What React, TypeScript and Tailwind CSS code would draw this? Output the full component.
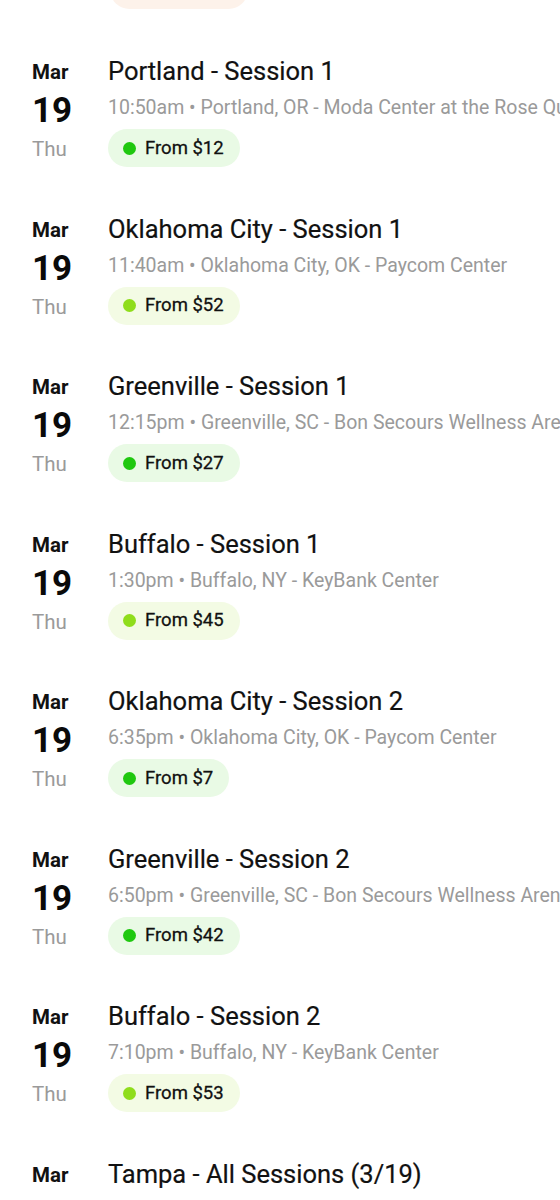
import React from 'react';

type Tone = 'green' | 'lime' | 'peach';

type Event = {
  title: string;
  time: string;
  place: string;
  price: string;
  tone: Tone;
};

const events: Event[] = [
  { title: 'Portland - Session 1', time: '10:50am', place: 'Portland, OR - Moda Center at the Rose Quarter', price: '$12', tone: 'green' },
  { title: 'Oklahoma City - Session 1', time: '11:40am', place: 'Oklahoma City, OK - Paycom Center', price: '$52', tone: 'lime' },
  { title: 'Greenville - Session 1', time: '12:15pm', place: 'Greenville, SC - Bon Secours Wellness Arena', price: '$27', tone: 'green' },
  { title: 'Buffalo - Session 1', time: '1:30pm', place: 'Buffalo, NY - KeyBank Center', price: '$45', tone: 'lime' },
  { title: 'Oklahoma City - Session 2', time: '6:35pm', place: 'Oklahoma City, OK - Paycom Center', price: '$7', tone: 'green' },
  { title: 'Greenville - Session 2', time: '6:50pm', place: 'Greenville, SC - Bon Secours Wellness Arena', price: '$42', tone: 'green' },
  { title: 'Buffalo - Session 2', time: '7:10pm', place: 'Buffalo, NY - KeyBank Center', price: '$53', tone: 'lime' },
  { title: 'Tampa - All Sessions (3/19)', time: '12:00pm', place: 'Tampa, FL - Amalie Arena', price: '$60', tone: 'green' },
];

const pillStyles: Record<Tone, { bg: string; dot: string }> = {
  green: { bg: 'bg-[#e9fae5]', dot: 'bg-[#1fc80f]' },
  lime: { bg: 'bg-[#f3fbe4]', dot: 'bg-[#8fdd1b]' },
  peach: { bg: 'bg-[#fdf2ea]', dot: 'bg-[#f5a25d]' },
};

function PricePill({ price, tone }: { price: string; tone: Tone }) {
  const s = pillStyles[tone];
  return (
    <div className={`mt-[8px] inline-flex h-[38px] items-center rounded-full pl-[15px] pr-[16px] ${s.bg}`}>
      <span className={`h-[13px] w-[13px] rounded-full ${s.dot}`} />
      <span className="ml-[9px] text-[18.5px] leading-none text-[#111] [-webkit-text-stroke:0.3px_#111]">From {price}</span>
    </div>
  );
}

function EventRow({ e }: { e: Event }) {
  return (
    <div className="flex h-[157.5px] items-start pt-[22px]">
      <div className="flex w-[108px] shrink-0 flex-col pl-[32px] pt-[3px]">
        <div className="text-[20.5px] font-bold leading-[28px] text-[#111]">Mar</div>
        <div className="mt-[5px] text-[35px] font-bold leading-[40px] text-[#0a0a0a]">19</div>
        <div className="mt-[4px] text-[20.5px] leading-[28px] text-[#9a9a9a]">Thu</div>
      </div>
      <div className="flex min-w-0 flex-col items-start">
        <div className="whitespace-nowrap text-[25.5px] leading-[32px] text-[#111] [-webkit-text-stroke:0.2px_#111]">{e.title}</div>
        <div className="mt-[8px] whitespace-nowrap text-[19.5px] leading-[26px] text-[#9a9a9a]">
          {e.time} • {e.place}
        </div>
        <PricePill price={e.price} tone={e.tone} />
      </div>
    </div>
  );
}

export default function App() {
  return (
    <div className="h-[1200px] w-[560px] overflow-hidden bg-white" style={{ fontFamily: 'Roboto, "Noto Sans", sans-serif' }}>
      {/* tail of the row scrolled past above */}
      <div className="flex h-[33px] items-start pl-[110px]">
        <div className="mt-[-30px] h-[39px] w-[138px] rounded-full bg-[#fdf2ea]" />
      </div>
      {events.map((e, i) => (
        <EventRow key={i} e={e} />
      ))}
    </div>
  );
}
